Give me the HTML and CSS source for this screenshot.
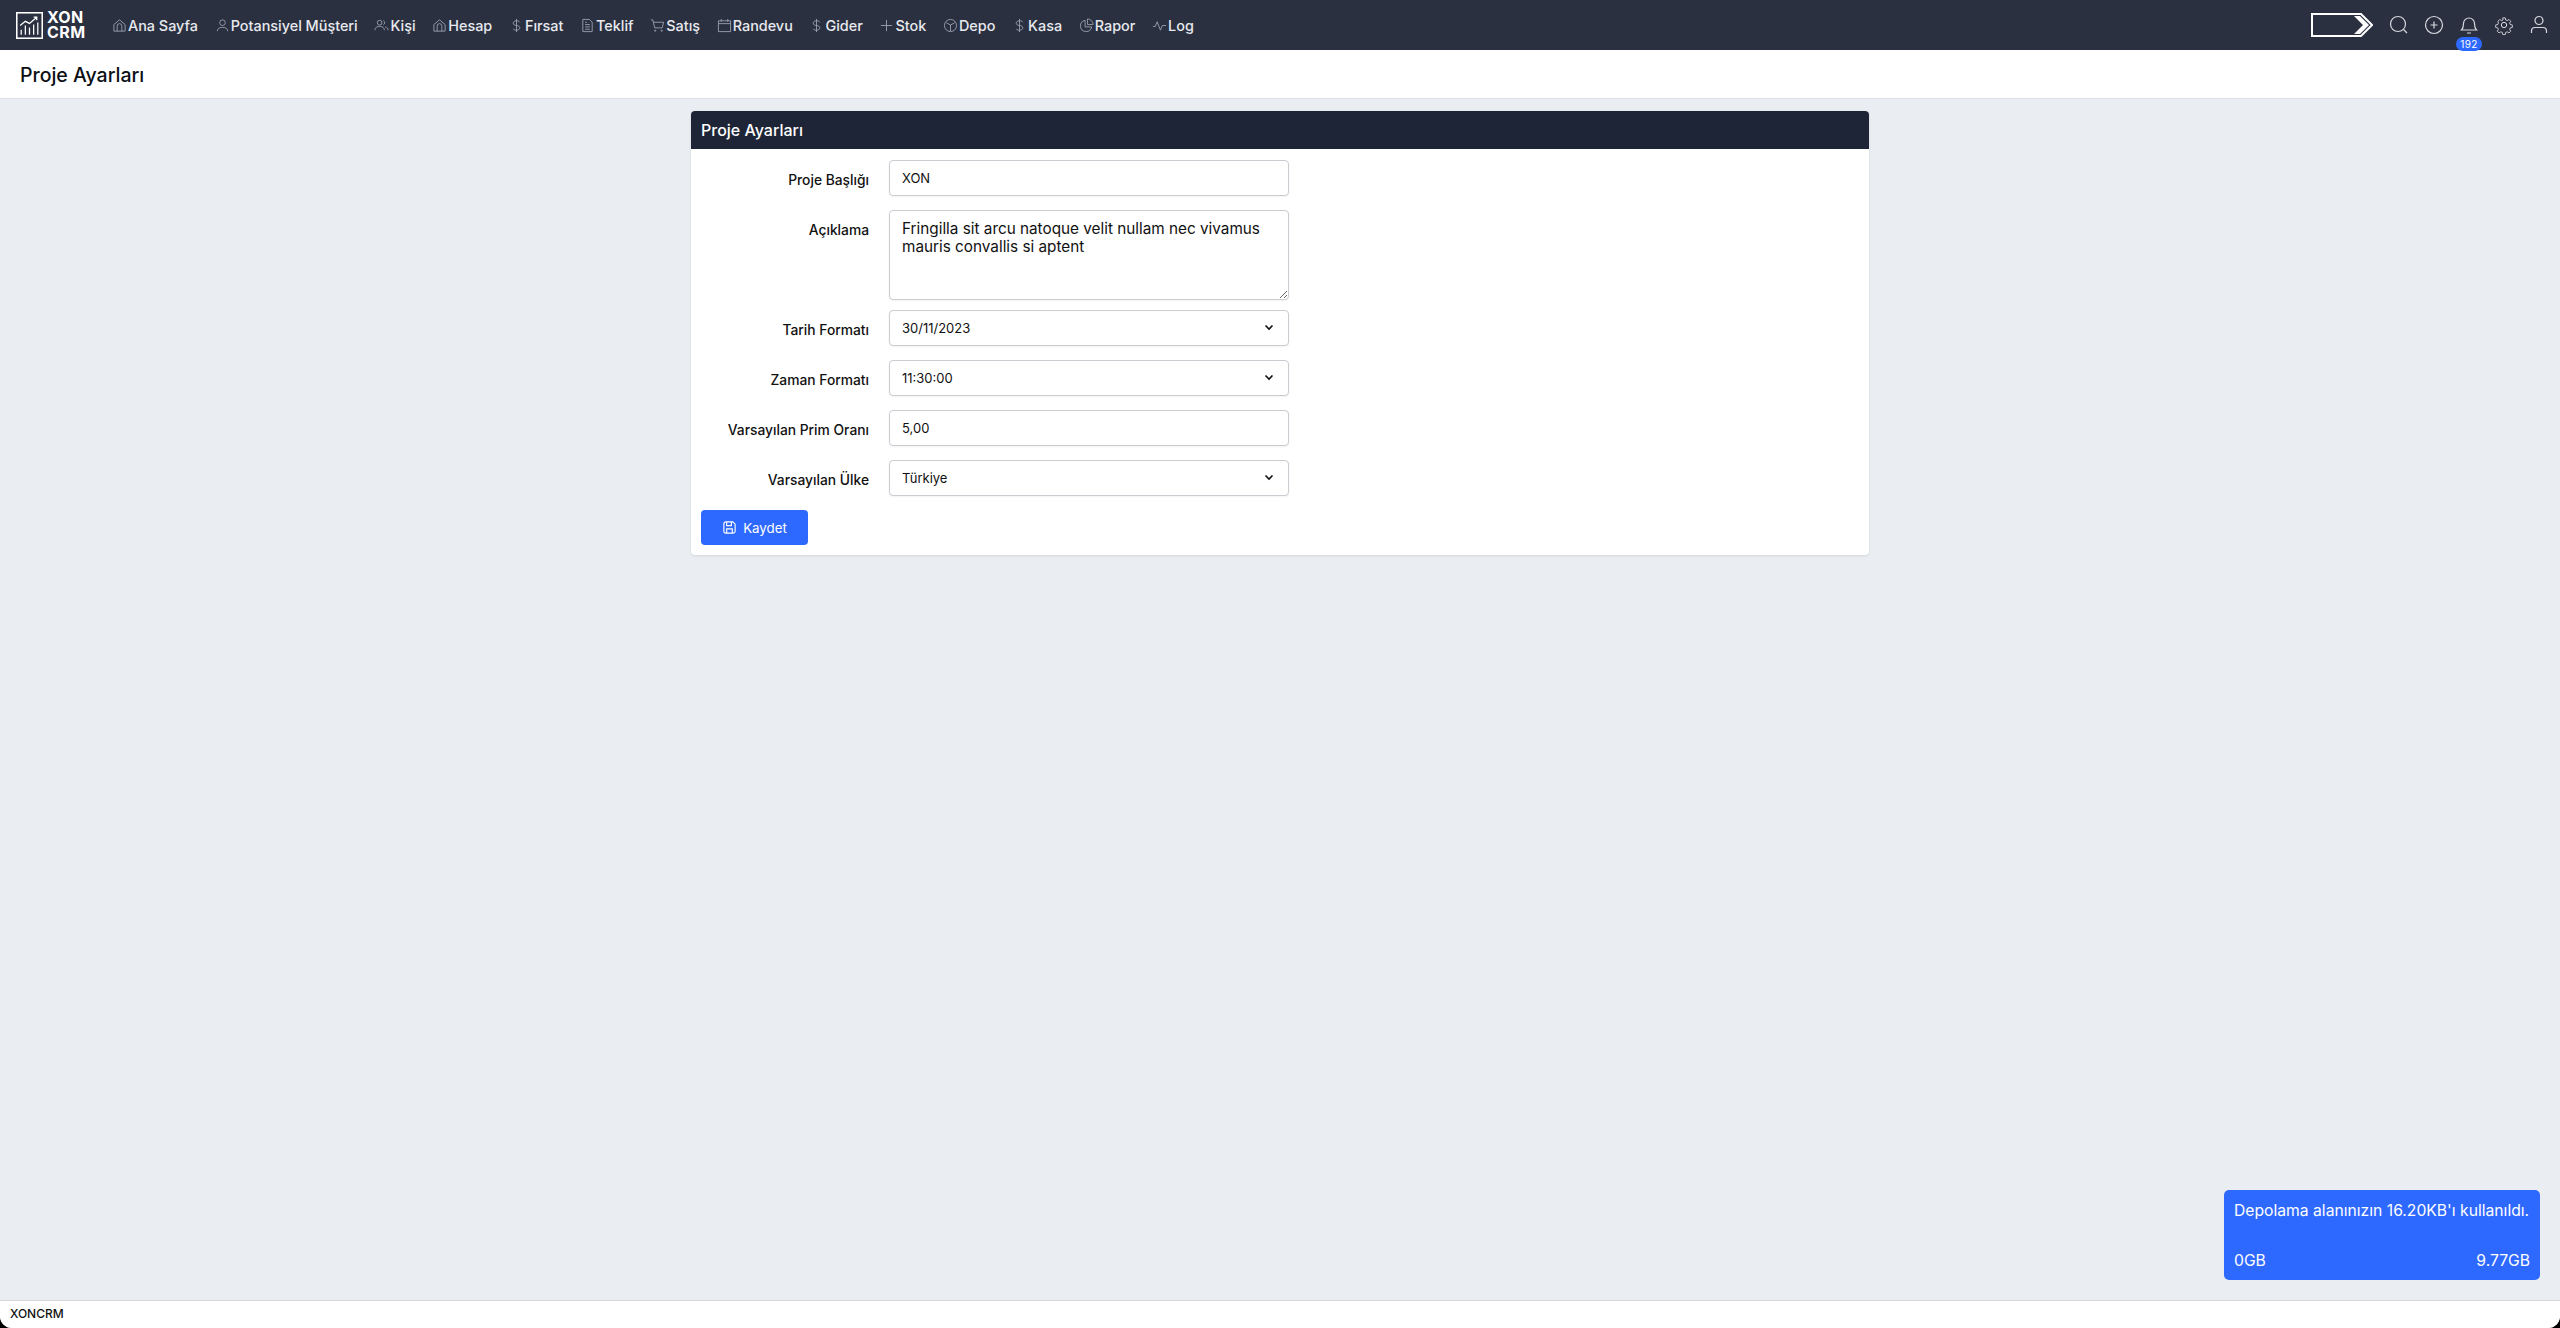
FILE: index.html
```html
<!DOCTYPE html>
<html lang="tr">
<head>
<meta charset="utf-8">
<title>Proje Ayarları</title>
<link rel="stylesheet" href="styles.css">
</head>
<body>
<div class="app">
  <header class="nav">
    <div class="logo">
      <svg class="logo-mark" viewBox="0 0 26 26" width="27" height="27" fill="none" stroke="#fff"><rect x="0.75" y="0.75" width="24.5" height="24.5" stroke-width="1.5"/><path d="M4 13l5-4 4 2 7-6M17 5h3v3" stroke-width="1.2"/><path d="M5 22v-5M9 22v-9M13 22v-7M17 22v-10M21 22v-12" stroke-width="1.2"/></svg>
      <div class="logo-text">XON<br>CRM</div>
    </div>
    <nav class="menu">
      <a class="item"><svg class="ico" viewBox="0 0 16 16"><path d="M2 14V7l6-5 6 5v7zM5.500 14V8.500a2.500 2.500 0 0 1 5 0V14"/></svg>Ana Sayfa</a>
      <a class="item"><svg class="ico" viewBox="0 0 16 16"><circle cx="8" cy="5" r="3"/><path d="M2.500 14c0-3 2.500-4 5.500-4s5.500 1 5.500 4"/></svg>Potansiyel Müşteri</a>
      <a class="item"><svg class="ico" viewBox="0 0 16 16"><circle cx="6" cy="5" r="2.500"/><path d="M1 13c0-3 2-4 5-4s5 1 5 4M10 2.800a2.500 2.500 0 0 1 0 4.500M12 9.500c2 .5 3 1.500 3 3.500"/></svg>Kişi</a>
      <a class="item"><svg class="ico" viewBox="0 0 16 16"><path d="M2 14V7l6-5 6 5v7zM5.500 14V8.500a2.500 2.500 0 0 1 5 0V14"/></svg>Hesap</a>
      <a class="item"><svg class="ico" viewBox="0 0 16 16"><path d="M8 1v14M11.500 4.500C11 3.500 10 3 8 3 6 3 4.500 4 4.500 5.500S6 8 8 8s3.500 1 3.500 2.500S10 13 8 13c-2 0-3-.5-3.500-1.500"/></svg>Fırsat</a>
      <a class="item"><svg class="ico" viewBox="0 0 16 16"><path d="M3 1.500h7l3 3v10H3zM5.500 7h5M5.500 9.500h5M5.500 12h5M5.500 4.500h2"/></svg>Teklif</a>
      <a class="item"><svg class="ico" viewBox="0 0 16 16"><path d="M1 2h2l2 8.500h8l1.500-6H3.500"/><circle cx="5.500" cy="13.500" r=".7"/><circle cx="12.500" cy="13.500" r=".7"/></svg>Satış</a>
      <a class="item"><svg class="ico" viewBox="0 0 16 16"><path d="M1.500 3h13v11.500h-13zM1.500 6h13M4.500 1v3M11.500 1v3"/></svg>Randevu</a>
      <a class="item"><svg class="ico" viewBox="0 0 16 16"><path d="M8 1v14M11.500 4.500C11 3.500 10 3 8 3 6 3 4.500 4 4.500 5.500S6 8 8 8s3.500 1 3.500 2.500S10 13 8 13c-2 0-3-.5-3.500-1.500"/></svg>Gider</a>
      <a class="item"><svg class="ico" viewBox="0 0 16 16"><path d="M8 2v12M2 8h12"/></svg>Stok</a>
      <a class="item"><svg class="ico" viewBox="0 0 16 16"><path d="M8 1.500a6.500 6.500 0 1 0 0 13 6.500 6.500 0 0 0 0-13zM3.500 5L8 7.500 12.500 5M8 7.500V14"/></svg>Depo</a>
      <a class="item"><svg class="ico" viewBox="0 0 16 16"><path d="M8 1v14M11.500 4.500C11 3.500 10 3 8 3 6 3 4.500 4 4.500 5.500S6 8 8 8s3.500 1 3.500 2.500S10 13 8 13c-2 0-3-.5-3.500-1.500"/></svg>Kasa</a>
      <a class="item"><svg class="ico" viewBox="0 0 16 16"><path d="M6.500 2.500a6 6 0 1 0 7 7H6.500zM9 1a6 6 0 0 1 6 6H9z"/></svg>Rapor</a>
      <a class="item"><svg class="ico" viewBox="0 0 16 16"><path d="M1 9h2.500l2-5 3.500 9 2-5h4"/></svg>Log</a>
    </nav>
    <div class="tools">
      <svg class="arrow-box" viewBox="0 0 62 24" width="62" height="24"><path d="M1 1h49l11 11-11 11H1z" fill="none" stroke="#fff" stroke-width="2"/><path d="M43 3h6l9 9-9 9h-6l9-9z" fill="#fff"/></svg>
      <svg class="tool" viewBox="0 0 20 20"><circle cx="9" cy="9" r="7.500"/><path d="M14.500 14.500L18 18"/></svg>
      <svg class="tool" viewBox="0 0 20 20"><circle cx="10" cy="10" r="8.500"/><path d="M10 6.500v7M6.500 10h7"/></svg>
      <div class="bell">
        <svg class="tool" viewBox="0 0 20 20"><path d="M2.500 15h15c-1.500-1.500-2-3-2-6.500a5.500 5.500 0 0 0-11 0c0 3.500-.5 5-2 6.500zM8 18h4"/></svg>
        <span class="badge">192</span>
      </div>
      <svg class="tool" viewBox="0 0 24 24"><circle cx="12" cy="12" r="3.200"/><path d="M10.300 2.500h3.400l.6 2.800 1.900.8 2.400-1.500 2.400 2.400-1.500 2.400.8 1.900 2.800.6v3.400l-2.800.6-.8 1.900 1.500 2.400-2.400 2.400-2.400-1.500-1.900.8-.6 2.800h-3.400l-.6-2.800-1.900-.8-2.400 1.500-2.400-2.400 1.500-2.400-.8-1.900-2.800-.6v-3.400l2.800-.6.800-1.900L3.900 7l2.400-2.400 2.400 1.500 1.900-.8z" transform="translate(1.200 1.200) scale(.9)"/></svg>
      <svg class="tool" viewBox="0 0 20 20"><circle cx="10" cy="5.500" r="4"/><path d="M2.500 18v-2c0-2 1.500-3.500 3.500-3.500h8c2 0 3.500 1.500 3.500 3.500v2"/></svg>
    </div>
  </header>

  <div class="subheader"><h1 class="page-title">Proje Ayarları</h1></div>

  <main class="content">
    <section class="card">
      <h2 class="card-head">Proje Ayarları</h2>
      <form class="card-body">
        <div class="form-grid">
          <label class="lbl">Proje Başlığı</label>
          <input class="ctl" type="text" value="XON">
          <label class="lbl">Açıklama</label>
          <textarea class="ctl area">Fringilla sit arcu natoque velit nullam nec vivamus mauris convallis si aptent</textarea>
          <label class="lbl">Tarih Formatı</label>
          <div class="sel"><select class="ctl"><option>30/11/2023</option></select><svg class="chev" viewBox="0 0 12 12"><path d="M2.500 4.500L6 8l3.500-3.500"/></svg></div>
          <label class="lbl">Zaman Formatı</label>
          <div class="sel"><select class="ctl"><option>11:30:00</option></select><svg class="chev" viewBox="0 0 12 12"><path d="M2.500 4.500L6 8l3.500-3.500"/></svg></div>
          <label class="lbl">Varsayılan Prim Oranı</label>
          <input class="ctl" type="text" value="5,00">
          <label class="lbl">Varsayılan Ülke</label>
          <div class="sel"><select class="ctl"><option>Türkiye</option></select><svg class="chev" viewBox="0 0 12 12"><path d="M2.500 4.500L6 8l3.500-3.500"/></svg></div>
        </div>
        <button class="save" type="button"><svg class="save-ico" viewBox="0 0 16 16"><path d="M2 4a2 2 0 0 1 2-2h7.500L14 4.500V12a2 2 0 0 1-2 2H4a2 2 0 0 1-2-2zM5 2.500V6h5V2.500M5 14V9.500h6V14"/></svg>Kaydet</button>
      </form>
    </section>
  </main>

  <footer class="foot">XONCRM</footer>

  <aside class="storage">
    <p class="storage-msg">Depolama alanınızın 16.20KB'ı kullanıldı.</p>
    <div class="storage-range"><span>0GB</span><span>9.77GB</span></div>
  </aside>
</div>
</body>
</html>
```
FILE: styles.css
```css
* { box-sizing: border-box; }
html, body { margin: 0; height: 100%; background: #000; }
body { font-family: Inter, "Liberation Sans", sans-serif; color: #111; }
.app { position: relative; height: 1328px; display: flex; flex-direction: column; background: #eaedf2; border-radius: 0 0 12px 12px; overflow: hidden; }

.nav { height: 50px; flex: none; background: #2a3040; display: flex; align-items: center; padding: 0 11px 0 16px; color: #eef0f4; }
.logo { display: flex; align-items: center; gap: 4px; width: 96px; flex: none; }
.logo-mark { flex: none; }
.logo-text { font-size: 16px; font-weight: 700; line-height: 15px; letter-spacing: .4px; color: #fff; }
.menu { display: flex; align-items: center; gap: 16.700px; font-size: 14.400px; font-weight: 500; }
.item { display: flex; align-items: center; gap: 1px; white-space: nowrap; color: #e8eaef; }
.ico { width: 15px; height: 15px; fill: none; stroke: #a3a8b4; stroke-width: .9; flex: none; }
.tools { margin-left: auto; display: flex; align-items: center; gap: 15px; }
.arrow-box { flex: none; margin-right: 1px; }
.tool { width: 20px; height: 20px; fill: none; stroke: #d5d8de; stroke-width: 1.200; flex: none; display: block; }
.bell { position: relative; }
.badge { position: absolute; left: -3px; top: 22px; width: 26px; height: 14px; border-radius: 7px; background: #2e69ff; color: #fff; font-size: 10px; line-height: 14px; text-align: center; letter-spacing: .3px; }

.subheader { height: 49px; flex: none; background: #fff; border-bottom: 1px solid #dcdfe5; display: flex; align-items: center; padding: 2px 0 0 20px; }
.page-title { margin: 0; font-size: 19.500px; font-weight: 500; color: #0c0f14; }

.content { flex: 1; padding-top: 12px; display: flex; justify-content: center; align-items: flex-start; }
.card { width: 1178px; background: #fff; border-radius: 4px; box-shadow: 0 1px 3px rgba(0,0,0,.1); overflow: hidden; }
.card-head { margin: 0; height: 38px; background: #1e2536; color: #fff; font-size: 16px; font-weight: 500; line-height: 38px; padding-left: 10px; }
.card-body { padding: 11px 10px 10px; }
.form-grid { display: grid; grid-template-columns: 168px 400px; column-gap: 20px; row-gap: 14px; margin-bottom: 14px; }
.lbl { font-size: 13.800px; font-weight: 500; line-height: 20px; padding-top: 10px; text-align: right; color: #111; }
.ctl { width: 100%; height: 36px; border: 1px solid #c9ccd1; border-radius: 4px; background: #fff; padding: 0 12px; font: 400 13px Inter, sans-serif; color: #111; outline: none; display: block; box-shadow: 0 1px 2px rgba(0,0,0,.05); }
.area { height: 90px; margin-bottom: -4px; padding: 9px 12px; font-size: 15.300px; line-height: 18px; resize: vertical; }
.sel { position: relative; }
.sel select { appearance: none; -webkit-appearance: none; }
.chev { position: absolute; right: 14px; top: 11px; width: 12px; height: 12px; fill: none; stroke: #111; stroke-width: 1.600; pointer-events: none; }
.save { width: 107px; height: 35px; border: 0; border-radius: 4px; background: #2e69ff; color: #fff; font: 400 13.300px Inter, sans-serif; display: flex; align-items: center; justify-content: center; gap: 6px; padding: 0; }
.save-ico { width: 15px; height: 15px; fill: none; stroke: #fff; stroke-width: 1.200; flex: none; }

.foot { height: 28px; flex: none; background: #fff; border-top: 1px solid #d4d7dd; padding-left: 10px; font-size: 12px; font-weight: 500; line-height: 26px; color: #111; }

.storage { position: absolute; right: 20px; bottom: 48px; width: 316px; height: 90px; background: #2e69ff; border-radius: 5px; color: #fff; padding: 0 10px; font-size: 15.700px; display: flex; flex-direction: column; justify-content: space-between; }
.storage-msg { margin: 11px 0 0; line-height: 20px; }
.storage-range { display: flex; justify-content: space-between; line-height: 20px; margin-bottom: 9px; }
```
